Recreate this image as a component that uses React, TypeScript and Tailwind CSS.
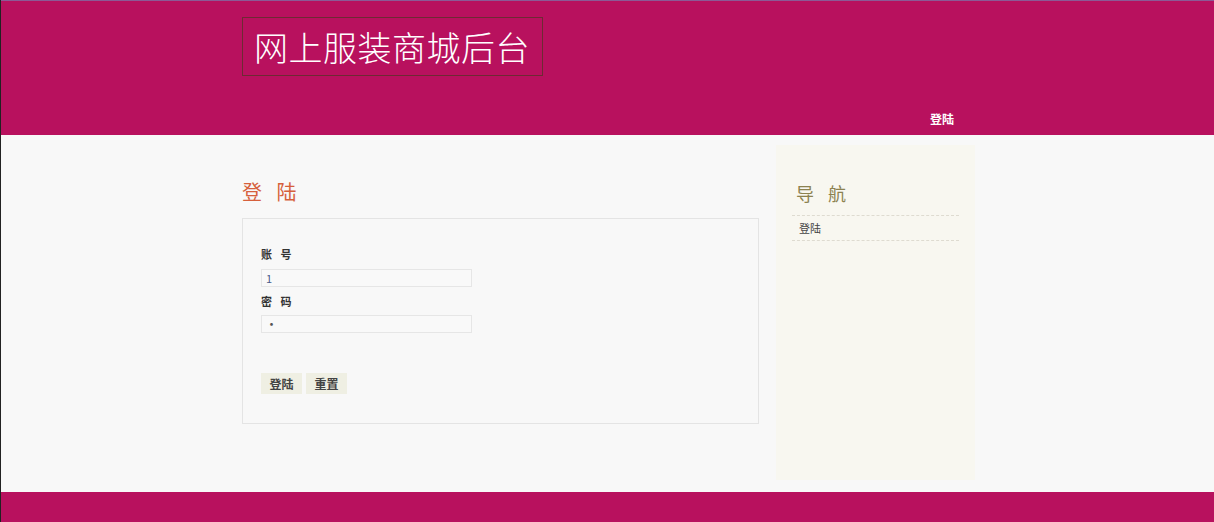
export default function App() {
  const font = { fontFamily: '"Noto Sans CJK SC", "Liberation Sans", sans-serif' };
  return (
    <div className="h-[522px] w-full overflow-hidden border-l border-[#222] bg-[#f8f8f8]" style={font}>
      <header className="h-[135px] border-t border-[#8c5a96] bg-[#b8115e]">
        <div className="relative mx-auto h-full w-[735px] pl-[2px]">
          <div className="pt-[16px]">
            <div className="flex h-[59px] w-[301px] items-center border border-[#6e2a33] pl-[11px]">
              <span className="text-[34px] font-light leading-none tracking-[0.5px] text-white">网上服装商城后台</span>
            </div>
          </div>
          <nav className="absolute right-[21px] top-[104px]">
            <a className="text-[12px] font-bold text-white">登陆</a>
          </nav>
        </div>
      </header>

      <main className="h-[357px]">
        <div className="mx-auto flex w-[735px] justify-between pl-[2px]">
          <section className="w-[517px] pt-[44px]">
            <h2 className="text-[20px] leading-[26px] tracking-[5px] text-[#d6603c]">登 陆</h2>
            <div className="mt-[13px] h-[206px] border border-[#e4e4e4] px-[18px] pt-[27px]">
              <label className="block text-[11px] font-bold leading-[16px] tracking-[3px] text-[#333]">账 号</label>
              <input
                className="mt-[7px] block h-[18px] w-[211px] border border-[#e6e6e6] bg-[#f9f9f9] px-[4px] text-[11px] text-[#4a5a8a] outline-none"
                defaultValue="1"
              />
              <label className="mt-[6px] block text-[11px] font-bold leading-[16px] tracking-[3px] text-[#333]">密 码</label>
              <input
                type="password"
                className="mt-[6px] block h-[18px] w-[211px] border border-[#e6e6e6] bg-[#f9f9f9] px-[3px] text-[13px] text-[#555] outline-none"
                defaultValue="1"
              />
              <div className="mt-[40px] flex gap-[4px]">
                <button className="h-[21px] w-[41px] bg-[#efefe3] text-[12px] font-bold text-[#444]">登陆</button>
                <button className="h-[21px] w-[41px] bg-[#efefe3] text-[12px] font-bold text-[#444]">重置</button>
              </div>
            </div>
          </section>

          <aside className="mt-[10px] h-[335px] w-[199px] bg-[#f8f7f0] px-[16px] pt-[36px]">
            <h3 className="pl-[4px] text-[18px] leading-[24px] tracking-[5px] text-[#8c8250]">导 航</h3>
            <ul className="mt-[10px] border-t border-dashed border-[#dedbd0]">
              <li className="border-b border-dashed border-[#dedbd0] py-[4px] pl-[7px] text-[11px] leading-[16px] text-[#444]">登陆</li>
            </ul>
          </aside>
        </div>
      </main>

      <footer className="h-[30px] bg-[#b8115e]" />
    </div>
  );
}
